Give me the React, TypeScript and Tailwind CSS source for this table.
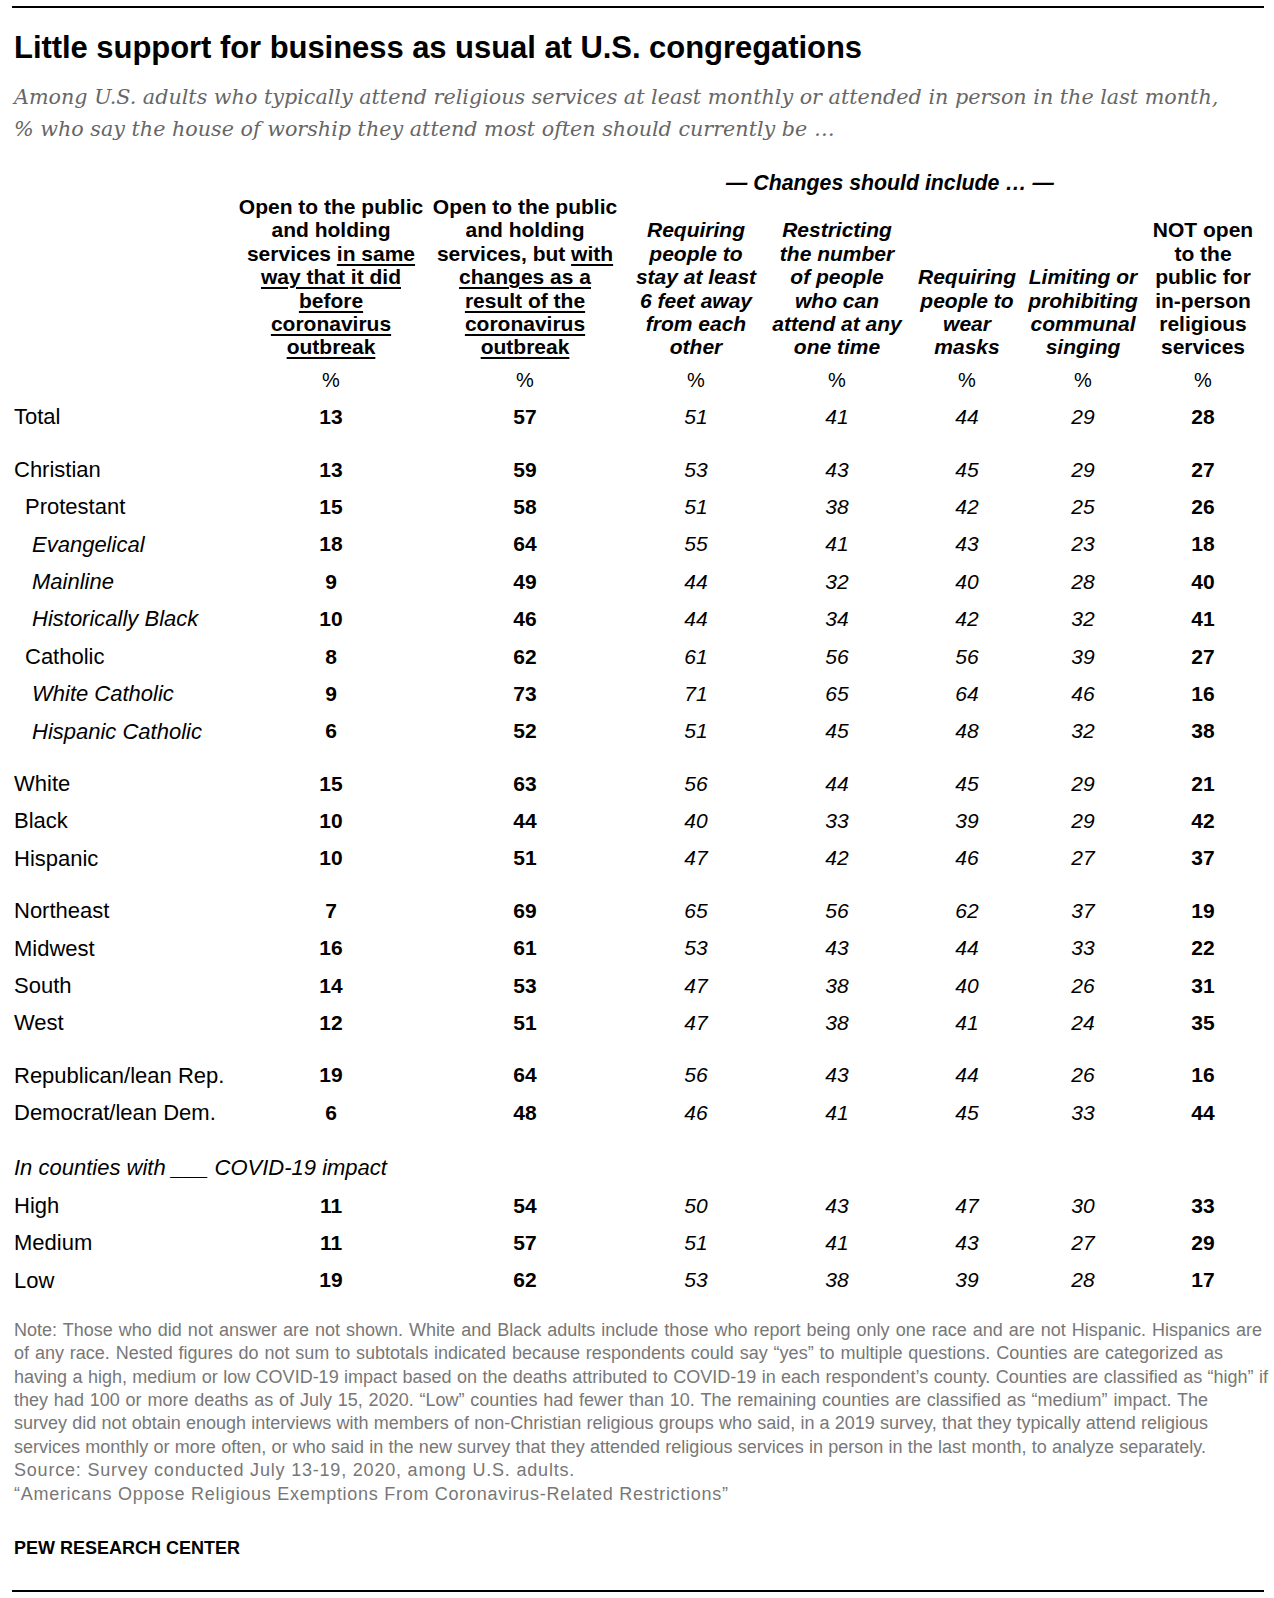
import React from "react";

type R = { label: string; indent?: number; italic?: boolean; v?: number[]; gap?: number };

const rows: R[] = [
  { label: "Total", v: [13, 57, 51, 41, 44, 29, 28] },
  { label: "Christian", v: [13, 59, 53, 43, 45, 29, 27], gap: 15 },
  { label: "Protestant", indent: 1, v: [15, 58, 51, 38, 42, 25, 26] },
  { label: "Evangelical", indent: 2, italic: true, v: [18, 64, 55, 41, 43, 23, 18] },
  { label: "Mainline", indent: 2, italic: true, v: [9, 49, 44, 32, 40, 28, 40] },
  { label: "Historically Black", indent: 2, italic: true, v: [10, 46, 44, 34, 42, 32, 41] },
  { label: "Catholic", indent: 1, v: [8, 62, 61, 56, 56, 39, 27] },
  { label: "White Catholic", indent: 2, italic: true, v: [9, 73, 71, 65, 64, 46, 16] },
  { label: "Hispanic Catholic", indent: 2, italic: true, v: [6, 52, 51, 45, 48, 32, 38] },
  { label: "White", v: [15, 63, 56, 44, 45, 29, 21], gap: 15 },
  { label: "Black", v: [10, 44, 40, 33, 39, 29, 42] },
  { label: "Hispanic", v: [10, 51, 47, 42, 46, 27, 37] },
  { label: "Northeast", v: [7, 69, 65, 56, 62, 37, 19], gap: 15 },
  { label: "Midwest", v: [16, 61, 53, 43, 44, 33, 22] },
  { label: "South", v: [14, 53, 47, 38, 40, 26, 31] },
  { label: "West", v: [12, 51, 47, 38, 41, 24, 35] },
  { label: "Republican/lean Rep.", v: [19, 64, 56, 43, 44, 26, 16], gap: 15 },
  { label: "Democrat/lean Dem.", v: [6, 48, 46, 41, 45, 33, 44] },
  { label: "In counties with ___ COVID-19 impact", italic: true, gap: 18 },
  { label: "High", v: [11, 54, 50, 43, 47, 30, 33] },
  { label: "Medium", v: [11, 57, 51, 41, 43, 27, 29] },
  { label: "Low", v: [19, 62, 53, 38, 39, 28, 17] },
];

const GRID = "grid grid-cols-[236px_190px_198px_144px_138px_122px_110px_130px]";

function Head({ children }: { children: React.ReactNode }) {
  return <div className="flex flex-col items-center justify-end">{children}</div>;
}
function L({ children }: { children: React.ReactNode }) {
  return <div className="whitespace-nowrap leading-[23.4px]">{children}</div>;
}
const U = "underline decoration-[1.6px] underline-offset-[3px]";

const notes: { t: string; w: string }[] = [
  {
    t: "Note: Those who did not answer are not shown. White and Black adults include those who report being only one race and are not Hispanic. Hispanics are",
    w: "w-[1248px]",
  },
  {
    t: "of any race. Nested figures do not sum to subtotals indicated because respondents could say \u201cyes\u201d to multiple questions. Counties are categorized as",
    w: "w-[1209px]",
  },
  {
    t: "having a high, medium or low COVID-19 impact based on the deaths attributed to COVID-19 in each respondent\u2019s county. Counties are classified as \u201chigh\u201d if",
    w: "w-[1254px]",
  },
  {
    t: "they had 100 or more deaths as of July 15, 2020. \u201cLow\u201d counties had fewer than 10. The remaining counties are classified as \u201cmedium\u201d impact. The",
    w: "w-[1194px]",
  },
  {
    t: "survey did not obtain enough interviews with members of non-Christian religious groups who said, in a 2019 survey, that they typically attend religious",
    w: "w-[1194px]",
  },
  {
    t: "services monthly or more often, or who said in the new survey that they attended religious services in person in the last month, to analyze separately.",
    w: "w-[1192px]",
  },
];

export default function App() {
  return (
    <div className="relative w-[1274px] h-[1598px] bg-white text-black font-['Liberation_Sans',Arial,sans-serif] flex flex-col overflow-hidden">
      <div className="ml-[12px] w-[1252px] h-[2px] mt-[6px] bg-black" />
      <div className="mt-[24px] pl-[14px] text-[31px] font-bold leading-[32px] whitespace-nowrap tracking-[-0.05px]">
        Little support for business as usual at U.S. congregations
      </div>
      <div className="mt-[17px] pl-[14px] text-[20.7px] italic leading-[32px] text-[#666] font-['DejaVu_Serif',Georgia,serif]">
        <div className="whitespace-nowrap">
          Among U.S. adults who typically attend religious services at least monthly or attended in person in the last month,
        </div>
        <div className="whitespace-nowrap">% who say the house of worship they attend most often should currently be &hellip;</div>
      </div>

      {/* header */}
      <div className={`${GRID} mt-[26px]`}>
        <div className="col-start-4 col-span-4 flex justify-center pl-[18px] text-[21.3px] font-bold italic leading-[24px] whitespace-nowrap">
          &mdash; Changes should include &hellip; &mdash;
        </div>
      </div>
      <div className={`${GRID} text-[21px] font-bold`}>
        <div />
        <Head>
          <L>Open to the public</L>
          <L>and holding</L>
          <L>
            services <span className={U}>in same</span>
          </L>
          <L><span className={U}>way that it did</span></L>
          <L><span className={U}>before</span></L>
          <L><span className={U}>coronavirus</span></L>
          <L><span className={U}>outbreak</span></L>
        </Head>
        <Head>
          <L>Open to the public</L>
          <L>and holding</L>
          <L>
            services, but <span className={U}>with</span>
          </L>
          <L><span className={U}>changes as a</span></L>
          <L><span className={U}>result of the</span></L>
          <L><span className={U}>coronavirus</span></L>
          <L><span className={U}>outbreak</span></L>
        </Head>
        <Head>
          <div className="italic flex flex-col items-center">
            <L>Requiring</L>
            <L>people to</L>
            <L>stay at least</L>
            <L>6 feet away</L>
            <L>from each</L>
            <L>other</L>
          </div>
        </Head>
        <Head>
          <div className="italic flex flex-col items-center">
            <L>Restricting</L>
            <L>the number</L>
            <L>of people</L>
            <L>who can</L>
            <L>attend at any</L>
            <L>one time</L>
          </div>
        </Head>
        <Head>
          <div className="italic flex flex-col items-center">
            <L>Requiring</L>
            <L>people to</L>
            <L>wear</L>
            <L>masks</L>
          </div>
        </Head>
        <Head>
          <div className="italic flex flex-col items-center">
            <L>Limiting or</L>
            <L>prohibiting</L>
            <L>communal</L>
            <L>singing</L>
          </div>
        </Head>
        <Head>
          <L>NOT open</L>
          <L>to the</L>
          <L>public for</L>
          <L>in-person</L>
          <L>religious</L>
          <L>services</L>
        </Head>
      </div>
      <div className={`${GRID} mt-[2px] h-[37.4px] items-center text-[20px]`}>
        <div />
        {[0, 1, 2, 3, 4, 5, 6].map((i) => (
          <div key={i} className="text-center">%</div>
        ))}
      </div>

      {/* body */}
      {rows.map((r, idx) => (
        <div
          key={idx}
          className={`${GRID} h-[37.4px] items-center ${r.gap === 15 ? "mt-[15px]" : r.gap === 18 ? "mt-[18px]" : ""}`}
        >
          <div
            className={`whitespace-nowrap text-[22px] ${r.italic ? "italic" : ""} ${
              r.indent === 1 ? "pl-[25px]" : r.indent === 2 ? "pl-[32px]" : "pl-[14px]"
            }`}
          >
            {r.label}
          </div>
          {r.v &&
            r.v.map((n, i) => (
              <div
                key={i}
                className={`text-center text-[21px] ${i === 0 || i === 1 || i === 6 ? "font-bold" : "italic"}`}
              >
                {n}
              </div>
            ))}
        </div>
      ))}

      {/* notes */}
      <div className="mt-[20px] pl-[14px] text-[18px] leading-[23.4px] text-[#777]">
        {notes.map((n, i) => (
          <div key={i} className={`whitespace-nowrap ${n.w} text-justify [text-align-last:justify]`}>
            {n.t}
          </div>
        ))}
        <div className="whitespace-nowrap tracking-[0.8px]">Source: Survey conducted July 13-19, 2020, among U.S. adults.</div>
        <div className="whitespace-nowrap tracking-[0.72px]">
          &ldquo;Americans Oppose Religious Exemptions From Coronavirus-Related Restrictions&rdquo;
        </div>
      </div>
      <div className="mt-[30px] pl-[14px] text-[18px] font-bold leading-[24px] whitespace-nowrap">PEW RESEARCH CENTER</div>
      <div className="ml-[12px] w-[1252px] h-[2px] mt-[30px] bg-black" />
    </div>
  );
}
